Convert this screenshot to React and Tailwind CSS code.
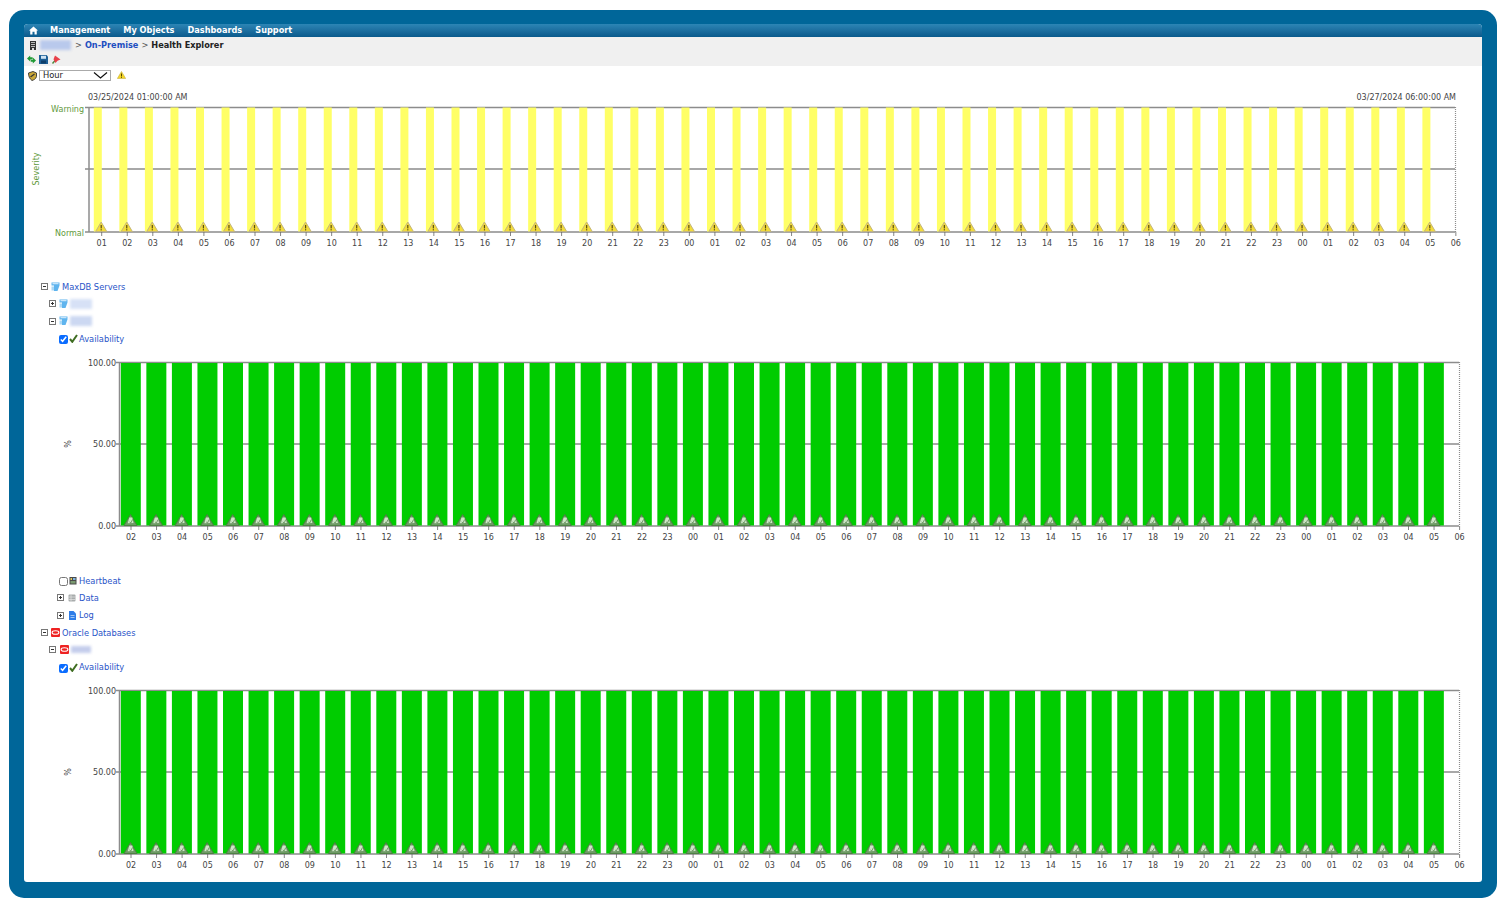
import React from "react";

const row1 = ["01","02","03","04","05","06","07","08","09","10","11","12","13","14","15","16","17","18","19","20","21","22","23","00"];
const sevLabels = [...row1, ...row1, "01","02","03","04","05","06"];
const pctLabels = sevLabels.slice(1);

function WarnGlyph({ x, y }) {
  return (
    <g transform={`translate(${x} ${y})`}>
      <path d="M0 -9.5 L5.6 0 L-5.6 0 Z" fill="#f3dc3a" stroke="#c4b67c" strokeWidth="1" strokeLinejoin="round" />
      <rect x="-0.6" y="-6.5" width="1.2" height="3.4" fill="#5a4e10" />
      <rect x="-0.6" y="-2.3" width="1.2" height="1.2" fill="#5a4e10" />
    </g>
  );
}

function OkGlyph({ x, y }) {
  return (
    <g transform={`translate(${x} ${y})`}>
      <path d="M0 -11 L6.5 0 L-6.5 0 Z" fill="#6f9a66" stroke="#4e7d44" strokeWidth="0.9" strokeLinejoin="round" />
      <path d="M-2.8 -2.2 L-1.2 -8 L1.8 -8 L3 -2.6 Z" fill="#cfe6c8" />
      <path d="M-1 -3.5 L0.4 -2.6 L2 -6" fill="none" stroke="#4e7d44" strokeWidth="0.7" />
    </g>
  );
}

function SeverityChart() {
  const x0 = 101.7, step = 25.55;
  return (
    <svg viewBox="24 88 1458 190" className="block h-[190px] w-[1458px]" fontSize="8" fill="#444">
      <text x="88" y="100">03/25/2024 01:00:00 AM</text>
      <text x="1456" y="100" textAnchor="end">03/27/2024 06:00:00 AM</text>
      <text x="84" y="112" textAnchor="end" fill="#5f9a3c">Warning</text>
      <text x="84" y="235.5" textAnchor="end" fill="#5f9a3c">Normal</text>
      <text x="0" y="0" transform="translate(39 169) rotate(-90)" textAnchor="middle" fill="#5f9a3c">Severity</text>
      <path d="M85 107.5H1455M85 169H1455M85 232H1455" stroke="#8c8c8c" strokeWidth="1.5" fill="none" />
      {sevLabels.slice(0, 53).map((_, i) => (
        <rect key={i} x={x0 + step * i - 7.9} y="107.5" width="8" height="124" fill="#ffff66" />
      ))}
      <path d="M89 107V232" stroke="#8c8c8c" strokeWidth="1.5" />
      <path d="M1455.5 107V232" stroke="#8c8c8c" strokeWidth="1.2" strokeDasharray="1 1" />
      {sevLabels.map((l, i) => (
        <g key={i}>
          <path d={`M${x0 + step * i} 232V236`} stroke="#666" strokeWidth="0.8" />
          {i < 53 && <WarnGlyph x={x0 + step * i - 0.5} y={231.5} />}
          <text x={x0 + step * i} y="246" textAnchor="middle">{l}</text>
        </g>
      ))}
    </svg>
  );
}

function PercentChart({ top, height }) {
  const x0 = 131, step = 25.55;
  const d = top;
  return (
    <svg viewBox={`24 ${top} 1458 ${height}`} className="block w-[1458px]" style={{ height }} fontSize="8" fill="#444">
      <text x="116" y={d + 18} textAnchor="end">100.00</text>
      <text x="116" y={d + 99} textAnchor="end">50.00</text>
      <text x="116" y={d + 181} textAnchor="end">0.00</text>
      <text x="0" y="0" transform={`translate(71 ${d + 96}) rotate(-90)`} textAnchor="middle">%</text>
      <path d={`M116 ${d + 14.5}H1459M116 ${d + 96}H1459M116 ${d + 178}H1459`} stroke="#8c8c8c" strokeWidth="1.5" fill="none" />
      {pctLabels.slice(0, 52).map((_, i) => (
        <rect key={i} x={x0 + step * i - 10.2} y={d + 15} width="20" height="162.5" fill="#00cc00" />
      ))}
      <path d={`M119.5 ${d + 14}V${d + 178}`} stroke="#8c8c8c" strokeWidth="1.5" />
      <path d={`M1459.5 ${d + 14}V${d + 178}`} stroke="#8c8c8c" strokeWidth="1.2" strokeDasharray="1 1" />
      {pctLabels.map((l, i) => (
        <g key={i}>
          <path d={`M${x0 + step * i} ${d + 178}V${d + 182}`} stroke="#666" strokeWidth="0.8" />
          {i < 52 && <OkGlyph x={x0 + step * i - 0.5} y={d + 177.5} />}
          <text x={x0 + step * i} y={d + 192} textAnchor="middle">{l}</text>
        </g>
      ))}
    </svg>
  );
}

const BoxIcon = ({ plus }) => (
  <svg width="7" height="7" viewBox="0 0 7 7" className="shrink-0">
    <rect x="0.5" y="0.5" width="6" height="6" fill="#fff" stroke="#777" strokeWidth="1" />
    <path d="M2 3.5H5" stroke="#333" strokeWidth="1" />
    {plus && <path d="M3.5 2V5" stroke="#333" strokeWidth="1" />}
  </svg>
);

const ServerIcon = () => (
  <svg width="9" height="10" viewBox="0 0 9 10" className="shrink-0">
    <path d="M0.5 0.5H8.5V3.5L6.5 9H3L3 3.5H0.5Z" fill="#5fb4ee" />
    <rect x="1.5" y="1.2" width="6" height="1" fill="#dff1fd" />
    <rect x="0.5" y="4.5" width="2.5" height="4" fill="#a9d8f6" />
  </svg>
);

const OracleIcon = () => (
  <svg width="9" height="9" viewBox="0 0 9 9" className="shrink-0">
    <rect width="9" height="9" rx="1" fill="#ee2222" />
    <ellipse cx="4.5" cy="4.5" rx="3.4" ry="1.8" fill="none" stroke="#fff" strokeWidth="1.1" />
  </svg>
);

const Check = () => (
  <svg width="9" height="9" viewBox="0 0 9 9" className="shrink-0">
    <path d="M1 5 L3.3 7.8 L8 1" fill="none" stroke="#3f6d22" strokeWidth="2" />
  </svg>
);

const HeartIcon = () => (
  <svg width="8" height="9" viewBox="0 0 8 9" className="shrink-0">
    <rect x="0.5" y="1" width="7" height="7.5" fill="#4a4a4a" />
    <rect x="1.5" y="2" width="1.5" height="2" fill="#e6c95a" />
    <rect x="4" y="2" width="2.5" height="2" fill="#7db4e0" />
    <rect x="1.5" y="5" width="5" height="2.5" fill="#7a9a70" />
  </svg>
);

const DataIcon = () => (
  <svg width="8" height="8" viewBox="0 0 8 8" className="shrink-0">
    <rect x="0.5" y="0.5" width="7" height="7" rx="1" fill="#a8acac" />
    <path d="M0.5 3H7.5M0.5 5.5H7.5M3 0.5V7.5" stroke="#e4e4e4" strokeWidth="0.7" />
  </svg>
);

const LogIcon = () => (
  <svg width="7" height="9" viewBox="0 0 7 9" className="shrink-0">
    <path d="M0 0H4.5L7 2.5V9H0Z" fill="#2f7de8" />
    <path d="M1.5 4.5H5.5M1.5 6.5H5.5" stroke="#cfe2fb" strokeWidth="0.7" />
  </svg>
);

const SmallWarn = () => (
  <svg width="9" height="8" viewBox="0 0 9 8">
    <path d="M4.5 0.5L8.7 7.5H0.3Z" fill="#f5d626" stroke="#c8b14a" strokeWidth="0.6" />
    <rect x="4" y="2.5" width="1" height="2.8" fill="#554800" />
    <rect x="4" y="5.8" width="1" height="1" fill="#554800" />
  </svg>
);

const Blur = ({ w, tone = "bg-[#b9c9ec]" }) => (
  <span className={`block h-[10px] ${w} ${tone} blur-[1.5px] shrink-0`} />
);

const Link = ({ children }) => <span className="block -translate-y-[0.5px] text-[8.3px] text-[#2a55c8] whitespace-nowrap">{children}</span>;

const Tick = ({ checked }) => (
  <input type="checkbox" checked={checked} readOnly className="m-0 mt-[2px] h-[9px] w-[9px] shrink-0 accent-[#0a6cff]" />
);

const rowCls = "flex h-[17.33px] items-center leading-none";

export default function App() {
  return (
    <div className="h-[908px] w-[1508px] overflow-hidden bg-white pl-[9px] pt-[10px] font-['DejaVu_Sans','Liberation_Sans',sans-serif]">
      <div className="h-[888px] w-[1488px] rounded-[15px] bg-[#006699] pl-[15px] pt-[14px]">
        <div className="h-[858px] w-[1458px] overflow-hidden rounded-b-[3px] rounded-t-[4px] bg-white">
          {/* top nav */}
          <div className="flex h-[13px] items-center bg-gradient-to-b from-[#2c85b5] to-[#0a5a8c] pl-[5px] text-[8.2px] font-bold leading-none text-white">
            <svg width="9" height="9" viewBox="0 0 8 8" fill="#fff" className="mb-[1px] shrink-0">
              <path d="M4 0.5L8 4H6.9V7.5H4.9V5.2H3.1V7.5H1.1V4H0Z" />
            </svg>
            <span className="ml-[12px]">Management</span>
            <span className="ml-[13px]">My Objects</span>
            <span className="ml-[13px]">Dashboards</span>
            <span className="ml-[13px]">Support</span>
          </div>
          {/* breadcrumb */}
          <div className="flex h-[15px] items-center bg-[#f0f0f0] pl-[6px] pt-[1px] text-[8.2px] font-bold leading-none">
            <svg width="6" height="9" viewBox="0 0 6 9" className="shrink-0">
              <rect width="6" height="9" fill="#333" />
              <path d="M1 1.5H5M1 3.5H5M1 5.5H5" stroke="#ddd" strokeWidth="0.8" />
              <rect x="2" y="7" width="2" height="2" fill="#ddd" />
            </svg>
            <Blur w="ml-[4px] w-[31px]" />
            <span className="ml-[4px] font-normal text-[#555]">&gt;</span>
            <span className="ml-[3px] text-[#1e4fc0]">On-Premise</span>
            <span className="ml-[3px] font-normal text-[#555]">&gt;</span>
            <span className="ml-[3px] text-[#222]">Health Explorer</span>
          </div>
          {/* toolbar */}
          <div className="flex h-[14px] items-center gap-[3px] bg-[#f0f0f0] pl-[3px]">
            <svg width="9" height="9" viewBox="0 0 9 9" className="shrink-0">
              <path d="M0 3.5L3.2 0.5V2.2H5.5V4.6H3.2V6.5Z M9 5.5L5.8 8.5V6.8H3.8V4.9H5.8V2.6Z" fill="#1f9a34" />
            </svg>
            <svg width="9" height="9" viewBox="0 0 9 9" className="shrink-0">
              <path d="M0 0H7.5L9 1.5V9H0Z" fill="#1d5f96" />
              <rect x="2" y="0.8" width="5" height="3" fill="#cfe3f3" />
              <rect x="2" y="5.5" width="5" height="3" fill="#0f3f6a" />
            </svg>
            <svg width="10" height="9" viewBox="0 0 10 9" className="shrink-0">
              <path d="M1.5 8.5L4.5 5" stroke="#4f8a3f" strokeWidth="1.4" />
              <path d="M4 0.5L9.5 4.5L6.5 5.8L4.5 8L2.5 4.2Z" fill="#e8404a" />
            </svg>
          </div>
          {/* range row */}
          <div className="flex h-[22px] items-start pl-[4px] pt-[4px]">
            <svg width="9" height="10" viewBox="0 0 9 10" className="mt-[1px] shrink-0">
              <path d="M0.5 2L5 0.5L8.5 2V5.5C8 8 5.5 9 4 9.5C2 8 0.5 6 0.5 2Z" fill="#caa83a" stroke="#333" strokeWidth="0.9" />
              <path d="M2.5 6L6.5 3" stroke="#333" strokeWidth="1.2" />
            </svg>
            <div className="ml-[2px] flex h-[11px] w-[72px] items-center justify-between border border-[#aaaaaa] bg-white pl-[3px] pr-[2px] text-[8.3px] leading-none text-[#222]">
              <span>Hour</span>
              <svg width="15" height="7" viewBox="0 0 15 7" className="shrink-0">
                <path d="M1 0.5L7.5 6L14 0.5" fill="none" stroke="#111" strokeWidth="1.2" />
              </svg>
            </div>
            <span className="ml-[6px] mt-[1px] block">
              <SmallWarn />
            </span>
          </div>

          <SeverityChart />

          {/* tree 1 */}
          <div className="h-[70px]">
            <div className={`${rowCls} pl-[17px]`}>
              <BoxIcon />
              <span className="ml-[3px] flex"><ServerIcon /></span>
              <span className="ml-[2px]"><Link>MaxDB Servers</Link></span>
            </div>
            <div className={`${rowCls} pl-[25px]`}>
              <BoxIcon plus />
              <span className="ml-[3px] flex"><ServerIcon /></span>
              <Blur w="ml-[2px] w-[22px]" tone="bg-[#d7e1f6]" />
            </div>
            <div className={`${rowCls} pl-[25px]`}>
              <BoxIcon />
              <span className="ml-[3px] flex"><ServerIcon /></span>
              <Blur w="ml-[2px] w-[22px]" tone="bg-[#ccd8f2]" />
            </div>
            <div className={`${rowCls} pl-[35px]`}>
              <Tick checked />
              <span className="ml-[1px] flex"><Check /></span>
              <span className="ml-[1px]"><Link>Availability</Link></span>
            </div>
          </div>

          <PercentChart top={348} height={224} />

          {/* tree 2 */}
          <div className="h-[104px]">
            <div className={`${rowCls} pl-[35px]`}>
              <Tick checked={false} />
              <span className="ml-[1px] flex"><HeartIcon /></span>
              <span className="ml-[2px]"><Link>Heartbeat</Link></span>
            </div>
            <div className={`${rowCls} pl-[33px]`}>
              <BoxIcon plus />
              <span className="ml-[4px] flex"><DataIcon /></span>
              <span className="ml-[3px]"><Link>Data</Link></span>
            </div>
            <div className={`${rowCls} pl-[33px]`}>
              <BoxIcon plus />
              <span className="ml-[5px] flex"><LogIcon /></span>
              <span className="ml-[3px]"><Link>Log</Link></span>
            </div>
            <div className={`${rowCls} pl-[17px]`}>
              <BoxIcon />
              <span className="ml-[3px] flex"><OracleIcon /></span>
              <span className="ml-[2px]"><Link>Oracle Databases</Link></span>
            </div>
            <div className={`${rowCls} pl-[25px]`}>
              <BoxIcon />
              <span className="ml-[4px] flex"><OracleIcon /></span>
              <Blur w="ml-[2px] w-[20px] !h-[7px]" tone="bg-[#c4cdec]" />
            </div>
            <div className={`${rowCls} pl-[35px]`}>
              <Tick checked />
              <span className="ml-[1px] flex"><Check /></span>
              <span className="ml-[1px]"><Link>Availability</Link></span>
            </div>
          </div>

          <PercentChart top={676} height={206} />
        </div>
      </div>
    </div>
  );
}
